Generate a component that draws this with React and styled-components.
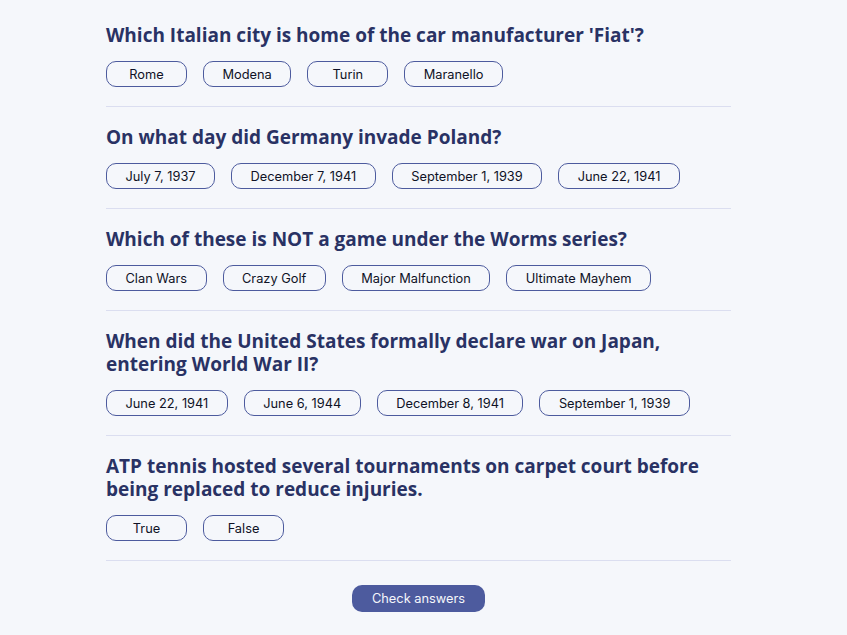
import React from 'react';
import styled, { createGlobalStyle } from 'styled-components';

const GlobalStyle = createGlobalStyle`
  body {
    margin: 0;
    background-color: #f5f7fb;
    font-family: 'Inter', 'Inter Variable', 'Liberation Sans', sans-serif;
  }
`;

const Page = styled.main`
  min-height: 635px;
  padding-top: 5px;
  box-sizing: border-box;
`;

const Quiz = styled.div`
  width: 625px;
  margin-left: 106px;
`;

const Question = styled.section`
  padding: 19px 0 19px;
  border-bottom: 1px solid #dbdef0;
`;

const Title = styled.h2`
  margin: 0 0 14px;
  font-family: 'Open Sans', 'Noto Sans', sans-serif;
  font-weight: 700;
  font-size: 19px;
  line-height: 23px;
  color: #293264;
`;

const Answers = styled.div`
  display: flex;
  gap: 16px;
`;

const Answer = styled.button`
  height: 26px;
  min-width: 81px;
  padding: 0 18.5px;
  box-sizing: border-box;
  border: 1px solid #4d5b9e;
  border-radius: 10px;
  background: transparent;
  font-family: 'Inter', 'Inter Variable', 'Liberation Sans', sans-serif;
  font-size: 12.8px;
  font-weight: 400;
  color: #0f1226;
  cursor: pointer;
`;

const Footer = styled.div`
  display: flex;
  justify-content: center;
  padding-top: 24px;
`;

const CheckButton = styled.button`
  height: 27px;
  padding: 0 19.5px;
  border: none;
  border-radius: 10px;
  background-color: #4d5b9e;
  color: #f5f7fb;
  font-family: 'Inter', 'Inter Variable', 'Liberation Sans', sans-serif;
  font-size: 12.8px;
  font-weight: 400;
  cursor: pointer;
`;

const questions = [
  {
    text: "Which Italian city is home of the car manufacturer 'Fiat'?",
    answers: ['Rome', 'Modena', 'Turin', 'Maranello'],
  },
  {
    text: 'On what day did Germany invade Poland?',
    answers: ['July 7, 1937', 'December 7, 1941', 'September 1, 1939', 'June 22, 1941'],
  },
  {
    text: 'Which of these is NOT a game under the Worms series?',
    answers: ['Clan Wars', 'Crazy Golf', 'Major Malfunction', 'Ultimate Mayhem'],
  },
  {
    text: 'When did the United States formally declare war on Japan, entering World War II?',
    answers: ['June 22, 1941', 'June 6, 1944', 'December 8, 1941', 'September 1, 1939'],
  },
  {
    text: 'ATP tennis hosted several tournaments on carpet court before being replaced to reduce injuries.',
    answers: ['True', 'False'],
  },
];

export default function App() {
  return (
    <>
      <GlobalStyle />
      <Page>
        <Quiz>
          {questions.map((q) => (
            <Question key={q.text}>
              <Title>{q.text}</Title>
              <Answers>
                {q.answers.map((a) => (
                  <Answer key={a}>{a}</Answer>
                ))}
              </Answers>
            </Question>
          ))}
          <Footer>
            <CheckButton>Check answers</CheckButton>
          </Footer>
        </Quiz>
      </Page>
    </>
  );
}
